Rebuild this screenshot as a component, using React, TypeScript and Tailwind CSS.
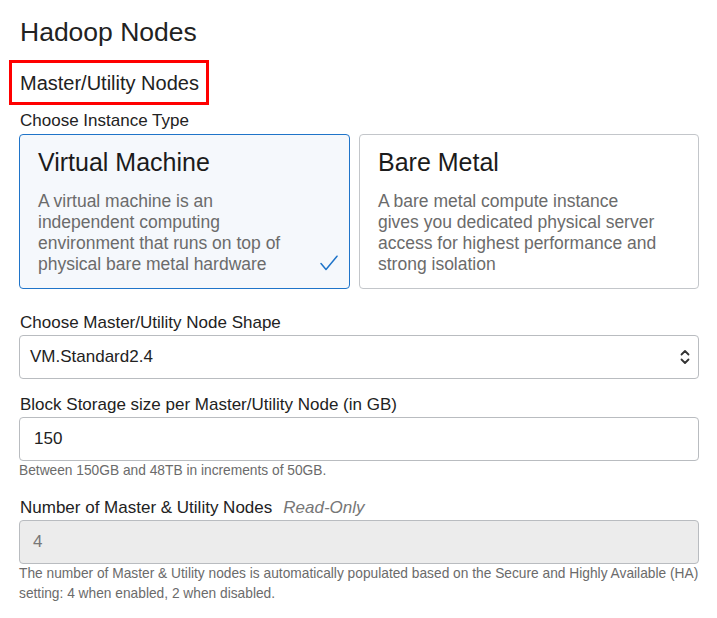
import React from "react";

function Check() {
  return (
    <svg width="18" height="16" viewBox="0 0 18 16" fill="none">
      <path d="M1 8.5 L6 14.5 L17 1.2" stroke="#1f74c9" strokeWidth="1.5" strokeLinecap="round" strokeLinejoin="round" />
    </svg>
  );
}

function Chevrons() {
  return (
    <svg width="10" height="16" viewBox="0 0 10 16" fill="none">
      <path d="M1.5 5.5 L5 2 L8.5 5.5" stroke="#333" strokeWidth="1.8" strokeLinecap="round" strokeLinejoin="round" />
      <path d="M1.5 10.5 L5 14 L8.5 10.5" stroke="#333" strokeWidth="1.8" strokeLinecap="round" strokeLinejoin="round" />
    </svg>
  );
}

export default function App() {
  return (
    <div
      className="w-[717px] h-[618px] bg-white pl-[19px] pr-[18px] text-[#222]"
      style={{ fontFamily: '"Liberation Sans", Arial, sans-serif' }}
    >
      <h1 className="pt-[17px] text-[26.5px] leading-[30px] pl-px">Hadoop Nodes</h1>

      <div className="mt-[13px] -ml-[10px] w-[200px] border-[3px] border-[#ff0000] pl-[8px] pt-[8px] pb-[7px] text-[20px] leading-[24px]">
        Master/Utility Nodes
      </div>

      <div className="mt-[6px] pl-px text-[17px] leading-[20px]">Choose Instance Type</div>

      <div className="mt-[3px] flex gap-[9px]">
        <div className="relative h-[155px] w-[331px] rounded-[4px] border border-[#1f74c9] bg-[#f5f8fc] pl-[18px] pr-[8px] pt-[13px]">
          <div className="text-[25px] leading-[28px] text-[#1b1b1b]">Virtual Machine</div>
          <div className="mt-[15px] text-[17.5px] leading-[21px] text-[#6b6b6b]">
            A virtual machine is an
            <br />
            independent computing
            <br />
            environment that runs on top of
            <br />
            physical bare metal hardware
          </div>
          <div className="absolute right-[11px] bottom-[17px]">
            <Check />
          </div>
        </div>
        <div className="h-[155px] flex-1 rounded-[4px] border border-[#c3c6ca] bg-white pl-[18px] pr-[8px] pt-[13px]">
          <div className="text-[25px] leading-[28px] text-[#1b1b1b]">Bare Metal</div>
          <div className="mt-[15px] text-[17.5px] leading-[21px] text-[#6b6b6b]">
            A bare metal compute instance
            <br />
            gives you dedicated physical server
            <br />
            access for highest performance and
            <br />
            strong isolation
          </div>
        </div>
      </div>

      <div className="mt-[24px] pl-px text-[17px] leading-[20px]">Choose Master/Utility Node Shape</div>
      <div className="mt-[2px] flex h-[44px] items-center justify-between rounded-[4px] border border-[#b9bcc0] bg-white pl-[10px] pr-[8px] text-[17px]">
        <span>VM.Standard2.4</span>
        <Chevrons />
      </div>

      <div className="mt-[16px] pl-px text-[17px] leading-[20px]">Block Storage size per Master/Utility Node (in GB)</div>
      <div className="mt-[2px] flex h-[44px] items-center rounded-[4px] border border-[#b9bcc0] bg-white pl-[14px] text-[17px]">
        150
      </div>
      <div className="text-[13.75px] leading-[20px] text-[#6b6b6b]">Between 150GB and 48TB in increments of 50GB.</div>

      <div className="mt-[17px] flex items-baseline pl-px text-[17px] leading-[20px]">
        <span>Number of Master &amp; Utility Nodes</span>
        <span className="ml-[11px] italic text-[#777]">Read-Only</span>
      </div>
      <div className="mt-[2px] flex h-[44px] items-center rounded-[4px] border border-[#b9bcc0] bg-[#ececec] pl-[13px] text-[17px] text-[#777]">
        4
      </div>
      <div className="text-[13.75px] leading-[20px] text-[#6b6b6b]">
        The number of Master &amp; Utility nodes is automatically populated based on the Secure and Highly Available (HA)
        setting: 4 when enabled, 2 when disabled.
      </div>
    </div>
  );
}
